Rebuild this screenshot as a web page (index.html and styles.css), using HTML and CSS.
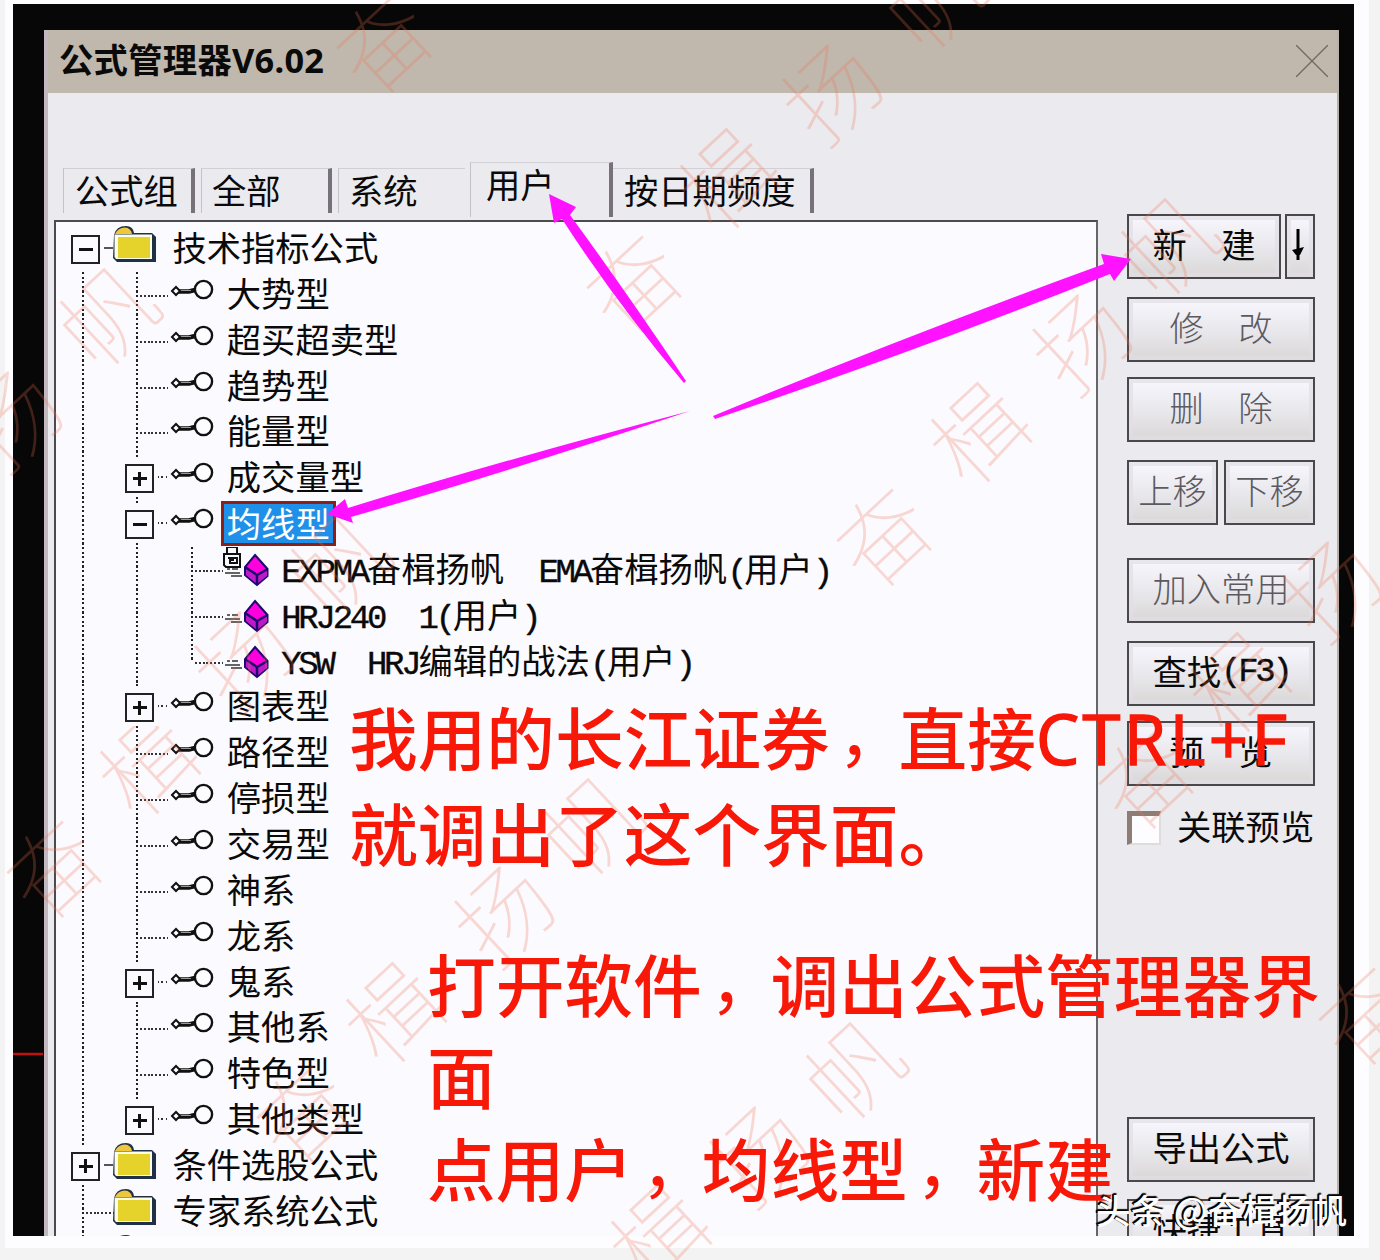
FILE: index.html
```html
<!DOCTYPE html>
<html lang="zh-CN">
<head>
  <meta charset="UTF-8">
  <meta name="viewport" content="width=device-width, initial-scale=1.0">
  <title>公式管理器V6.02</title>
  <link rel="stylesheet" href="styles.css">
</head>
<body>
  <!-- 图标定义 -->
  <svg class="defs" width="0" height="0">
    <symbol id="folder" viewBox="0 0 62 46">
      <path d="M4 9 Q6 0 16 0 Q23 0 24 7 L42 7 L46 11 L46 36 L7 36 L3 32 Z" fill="#1f3047"/>
      <path d="M5 8 Q8 1.500 15 1.500 Q21 2 22 8 Z" fill="#eec83a"/>
      <path d="M4.500 8.500 H42 V33 H6 L4.500 31 Z" fill="#fdfde8"/>
      <rect x="8" y="11" width="32" height="21" fill="#e5d32c"/>
    </symbol>
    <symbol id="key" viewBox="0 0 62 46">
      <path d="M13 19.500 H24 L30 18" fill="none" stroke="#111" stroke-width="4.500"/>
      <path d="M15 18.500 H26" stroke="#999" stroke-width="1"/>
      <path d="M7 19 L11 15 L15 19 L11 23 Z" fill="#fff" stroke="#111" stroke-width="2"/>
      <circle cx="38.500" cy="17.500" r="8.600" fill="#fdfcff" stroke="#111" stroke-width="2.400"/>
    </symbol>
    <symbol id="cube" viewBox="0 0 62 46">
      <path d="M36 8 L48.500 22 L48.500 29 L38 38 L26 28 L26 20 Z" fill="#f0d" stroke="#1c0870" stroke-width="2"/>
      <path d="M27 22 L37 29 V36 L27 28 Z M39 29 L48 23 V29 L39 36 Z" fill="#c01ac8"/>
      <path d="M26 20 L38 28 L48.500 22 M38 28 V38" fill="none" stroke="#1c0870" stroke-width="2.500"/>
      <path d="M8 22 H11 M13 22 H19 M6 26 H21 M12 29 H23" stroke="#333" stroke-width="1.500"/>
    </symbol>
    <symbol id="lock" viewBox="0 0 62 46">
      <path d="M8 6 V0 H18 V6 M5 7 H21 V20 H7 L5 18 Z M9 11 H18 V16 H11 V13 H15" fill="none" stroke="#111" stroke-width="2"/>
    </symbol>
  </svg>

  <div class="screen">
    <div class="window">
      <div class="titlebar">
        <h1>公式管理器V6.02</h1>
        <svg class="close" width="32" height="32" viewBox="0 0 32 32"><path d="M0 0 L32 32 M32 0 L0 32" stroke="#6d6862" stroke-width="1.300"/></svg>
      </div>

      <div class="content">
        <div class="left">
          <div class="tabs">
            <div class="tab t1">公式组</div>
            <div class="tab t2">全部</div>
            <div class="tab t3 open">系统</div>
            <div class="tab t4 active">用户</div>
            <div class="tab t5">按日期频度</div>
          </div>

          <div class="tree">
            <div class="row"><i class="g box minus"></i><svg class="icon"><use href="#folder"/></svg><span>技术指标公式</span></div>
            <div class="row"><i class="g v"></i><i class="g v h"></i><svg class="icon"><use href="#key"/></svg><span>大势型</span></div>
            <div class="row"><i class="g v"></i><i class="g v h"></i><svg class="icon"><use href="#key"/></svg><span>超买超卖型</span></div>
            <div class="row"><i class="g v"></i><i class="g v h"></i><svg class="icon"><use href="#key"/></svg><span>趋势型</span></div>
            <div class="row"><i class="g v"></i><i class="g v h"></i><svg class="icon"><use href="#key"/></svg><span>能量型</span></div>
            <div class="row"><i class="g v"></i><i class="g v h box plus"></i><svg class="icon"><use href="#key"/></svg><span>成交量型</span></div>
            <div class="row"><i class="g v"></i><i class="g v h box minus"></i><svg class="icon"><use href="#key"/></svg><span class="selected">均线型</span></div>
            <div class="row"><i class="g v"></i><i class="g v"></i><i class="g v h"></i><svg class="icon"><use href="#cube"/><use href="#lock"/></svg><span><b>EXPMA</b>奋楫扬帆<b>  EMA</b>奋楫扬帆<b>(</b>用户<b>)</b></span></div>
            <div class="row"><i class="g v"></i><i class="g v"></i><i class="g v h"></i><svg class="icon"><use href="#cube"/></svg><span><b>HRJ240  1(</b>用户<b>)</b></span></div>
            <div class="row"><i class="g v"></i><i class="g v"></i><i class="g v h last"></i><svg class="icon"><use href="#cube"/></svg><span><b>YSW  HRJ</b>编辑的战法<b>(</b>用户<b>)</b></span></div>
            <div class="row"><i class="g v"></i><i class="g v h box plus"></i><svg class="icon"><use href="#key"/></svg><span>图表型</span></div>
            <div class="row"><i class="g v"></i><i class="g v h"></i><svg class="icon"><use href="#key"/></svg><span>路径型</span></div>
            <div class="row"><i class="g v"></i><i class="g v h"></i><svg class="icon"><use href="#key"/></svg><span>停损型</span></div>
            <div class="row"><i class="g v"></i><i class="g v h"></i><svg class="icon"><use href="#key"/></svg><span>交易型</span></div>
            <div class="row"><i class="g v"></i><i class="g v h"></i><svg class="icon"><use href="#key"/></svg><span>神系</span></div>
            <div class="row"><i class="g v"></i><i class="g v h"></i><svg class="icon"><use href="#key"/></svg><span>龙系</span></div>
            <div class="row"><i class="g v"></i><i class="g v h box plus"></i><svg class="icon"><use href="#key"/></svg><span>鬼系</span></div>
            <div class="row"><i class="g v"></i><i class="g v h"></i><svg class="icon"><use href="#key"/></svg><span>其他系</span></div>
            <div class="row"><i class="g v"></i><i class="g v h"></i><svg class="icon"><use href="#key"/></svg><span>特色型</span></div>
            <div class="row"><i class="g v"></i><i class="g v h last box plus"></i><svg class="icon"><use href="#key"/></svg><span>其他类型</span></div>
            <div class="row"><i class="g v box plus"></i><svg class="icon"><use href="#folder"/></svg><span>条件选股公式</span></div>
            <div class="row"><i class="g v h"></i><svg class="icon"><use href="#folder"/></svg><span>专家系统公式</span></div>
            <div class="row"><i class="g v"></i><svg class="icon"><use href="#folder"/></svg></div>
          </div>
        </div>

        <div class="side">
          <div class="pair new"><button class="btn wide">新　建</button><button class="btn drop"><svg width="14" height="32" viewBox="0 0 14 32"><path d="M7 0 V31" stroke="#000" stroke-width="3"/><path d="M1 21 L13 18 L9 26 H5 Z" fill="#000"/></svg></button></div>
          <button class="btn off edit">修　改</button>
          <button class="btn off del">删　除</button>
          <div class="pair move"><button class="btn off half">上移</button><button class="btn off half">下移</button></div>
          <button class="btn off add">加入常用</button>
          <button class="btn find">查找<b>(F3)</b></button>
          <button class="btn preview">预　览</button>
          <label class="check"><i></i><span>关联预览</span></label>
          <button class="btn export">导出公式</button>
          <button class="btn quick">快捷工具</button>
        </div>
      </div>
    </div>
  </div>

  <!-- 水印、箭头，盖在窗口上面 -->
  <svg class="overlay" width="1380" height="1260" viewBox="0 0 1380 1260">
    <g class="mark">
      <text transform="translate(380 40) rotate(-43)">奋</text>
      <text transform="translate(630 280) rotate(-43)">奋</text>
      <text transform="translate(724 176) rotate(-43)">楫</text>
      <text transform="translate(828 88) rotate(-43)">扬</text>
      <text transform="translate(930 -5) rotate(-43)">帆</text>
      <text transform="translate(8 415) rotate(-43)">扬</text>
      <text transform="translate(104 312) rotate(-43)">帆</text>
      <text transform="translate(880 533) rotate(-43)">奋</text>
      <text transform="translate(975 430) rotate(-43)">楫</text>
      <text transform="translate(1078 338) rotate(-43)">扬</text>
      <text transform="translate(1165 242) rotate(-43)">帆</text>
      <text transform="translate(50 865) rotate(-43)">奋</text>
      <text transform="translate(144 762) rotate(-43)">楫</text>
      <text transform="translate(240 655) rotate(-43)">扬</text>
      <text transform="translate(335 560) rotate(-43)">帆</text>
      <text transform="translate(300 1110) rotate(-43)">奋</text>
      <text transform="translate(390 1010) rotate(-43)">楫</text>
      <text transform="translate(500 910) rotate(-43)">扬</text>
      <text transform="translate(588 822) rotate(-43)">帆</text>
      <text transform="translate(1142 776) rotate(-43)">奋</text>
      <text transform="translate(1235 680) rotate(-43)">楫</text>
      <text transform="translate(1328 585) rotate(-43)">扬</text>
      <text transform="translate(655 1232) rotate(-43)">楫</text>
      <text transform="translate(755 1150) rotate(-43)">扬</text>
      <text transform="translate(850 1066) rotate(-43)">帆</text>
      <text transform="translate(1362 1012) rotate(-43)">奋</text>
    </g>
    <path d="M13 1054 H43" stroke="#c01010" stroke-width="2.500"/>
    <g fill="#ff12ff">
      <path d="M549 194 L576 207 L570 215 Q625 290 686 381 L684 383 Q617 304 562 219 L554 223 Z"/>
      <path d="M1131 259 L1114 281 L1110 274 Q920 350 715 419 L713 416 Q900 338 1104 264 L1101 254 Z"/>
      <path d="M327 514 L345 499 L348 508 Q500 461 690 411 Q510 471 351 517 L353 523 Z"/>
    </g>
  </svg>

  <div class="note note1"><p>我用的长江证券<i>，</i>直接<em>CTRL+F</em></p><p>就调出了这个界面。</p></div>
  <div class="note note2"><p>打开软件<i>，</i>调出公式管理器界</p><p>面</p><p>点用户<i>，</i>均线型<i>，</i>新建</p></div>
  <div class="author">头条 @奋楫扬帆</div>
</body>
</html>
```

FILE: styles.css
```css
* {
  box-sizing: border-box;
}

body {
  margin: 0;
  width: 1380px;
  height: 1260px;
  padding: 4px 0 0 13px;
  overflow: hidden;
  position: relative;
  background: linear-gradient(#fdfcff, #fdfcff) 5px 0 / 1364px 1248px no-repeat #f3f3f3;
  font-family: "Noto Sans CJK SC", sans-serif;
  font-size: 34.3px;
  color: #0a0a0a;
}

.defs {
  position: absolute;
}

.screen {
  width: 1341px;
  height: 1232px;
  padding: 26px 15px 0 31px;
  background: #080707;
  overflow: hidden;
}

.window {
  height: 1206px;
  background: #ebeaee;
  border-left: 4px solid #c2b8c0;
  border-right: 2px solid #b8b0aa;
  overflow: hidden;
}

.titlebar {
  display: flex;
  align-items: center;
  justify-content: space-between;
  height: 63px;
  margin-left: -4px;
  margin-right: -2px;
  padding: 0 11px 2px 15px;
  background: #c0b7ad;
}

.titlebar h1 {
  margin: 0;
  padding-bottom: 2px;
  font: bold 34.3px/58px "Noto Sans", "Noto Sans CJK SC", sans-serif;
  letter-spacing: 0.3px;
}

.content {
  display: flex;
  padding-left: 6px;
  height: 1143px;
}

.left {
  width: 1044px;
  padding-top: 69px;
}

.tabs {
  display: flex;
  height: 58px;
  padding: 6px 0 0 9px;
}

.tab {
  height: 45px;
  padding-left: 11px;
  line-height: 41px;
  border-top: 1px solid #d2d0d4;
  border-left: 1px solid #c4c2c6;
  border-right: 4px solid #77727a;
  white-space: nowrap;
}

.t1 { width: 132px; }
.t2 { width: 131px; margin-left: 6px; padding-left: 10px; }
.t3 { width: 127px; margin-left: 6px; padding-left: 10px; }
.t4 { width: 143px; margin-left: 5px; padding-left: 15px; }
.t5 { width: 201px; border-left: none; }

.tab.open {
  border-right: none;
}

.tab.active {
  height: 55px;
  margin-top: -6px;
}

.tree {
  height: 1020px;
  padding-top: 4px;
  background: #fbfaff;
  border: 2px solid #4c4a4e;
  border-right-color: #666;
  overflow: hidden;
}

.row {
  display: flex;
  height: 45.85px;
  line-height: 40px;
  white-space: pre;
}

/* 树形虚线：v 竖线，h 横线，box 展开按钮 */
.g {
  position: relative;
  flex: none;
  width: 54.4px;
}

.g.v::before {
  content: "";
  position: absolute;
  left: 26px;
  top: 0;
  width: 2px;
  height: 100%;
  background: repeating-linear-gradient(#222 0 2.3px, transparent 2.3px 4.585px);
}

.g.v.last::before {
  height: 50%;
}

.g.h::after {
  content: "";
  position: absolute;
  left: 30px;
  top: 23px;
  width: 28px;
  height: 2px;
  background: repeating-linear-gradient(90deg, #333 0 2px, transparent 2px 3.8px);
}

.g.box::before {
  content: "";
  position: absolute;
  left: 14px;
  top: 9px;
  width: 26px;
  height: 25px;
  border: 2px solid #222;
  outline: 4px solid #fbfaff;
  background: linear-gradient(#111, #111) center / 14px 3px no-repeat #fbfaff;
  z-index: 1;
}

/* last 的竖线只画一半，按钮本身不缩 */
.g.v.box::before {
  height: 25px;
}

.g.v.box::before,
.g.box::before {
  left: 15px;
  width: 25px;
  height: 25px;
}

.g.v.box.minus::before {
  background: linear-gradient(#111, #111) center / 14px 3px no-repeat #fbfaff;
}

.g.box.plus::before {
  background: linear-gradient(#111, #111) center / 14px 3px no-repeat, linear-gradient(#111, #111) center / 3px 14px no-repeat #fbfaff;
}

.g.box::after {
  content: "";
  position: absolute;
  left: 42px;
  top: 21px;
  width: 15px;
  height: 2px;
  background: #555;
}

.g.box.h::after {
  background: repeating-linear-gradient(90deg, #333 0 2px, transparent 2px 4.5px);
}

/* 展开按钮上下的竖线 */
.g.v.box {
  background: repeating-linear-gradient(#222 0 2.3px, transparent 2.3px 4.585px) 26px 0 / 2px 100% no-repeat;
}

.g.v.box.last {
  background-size: 2px 50%;
}

.icon {
  flex: none;
  width: 62px;
  height: 46px;
}

.row b, .btn b {
  font: normal 34px/36px "Liberation Mono", monospace;
  letter-spacing: -3.25px;
  -webkit-text-stroke: 0.4px #0a0a0a;
}

.row .selected {
  height: 45px;
  margin-left: -6px;
  padding: 0 3px;
  line-height: 36px;
  color: #fff;
  background: #1e90ea;
  border: 3px solid #8c2018;
}

.side {
  display: flex;
  flex-direction: column;
  width: 188px;
  margin-left: 29px;
  padding-top: 121px;
}

.btn {
  flex: none;
  display: flex;
  align-items: center;
  justify-content: center;
  width: 100%;
  height: 65px;
  padding: 0 0 7px;
  font: 34.3px "Noto Sans CJK SC", sans-serif;
  color: #0a0a0a;
  white-space: nowrap;
  background: linear-gradient(#f8f7fd, #e9e8ed 50%, #d9d7d6);
  border: 2px solid #4a484a;
  box-shadow: inset 0 0 0 4px rgba(225, 222, 230, 0.7);
}

.btn.off {
  color: #5c5a5f;
  font-weight: 300;
}

.btn b {
  padding-top: 4px;
}

.pair {
  display: flex;
  gap: 6px;
}

.pair .wide { width: 154px; }
.pair .drop { width: 30px; padding: 0 4px 3px 0; }
.pair .half { width: 91px; }
.new { gap: 4px; }
.edit { margin-top: 18px; }
.del { margin-top: 15px; }
.move { margin-top: 18px; }
.add { margin-top: 33px; }
.find { margin-top: 18px; }
.preview { margin-top: 15px; }
.export { margin-top: 272px; }
.quick { margin-top: 17px; }

.check {
  display: flex;
  align-items: center;
  gap: 16px;
  height: 40px;
  margin-top: 22px;
  margin-bottom: -3px;
  white-space: nowrap;
}

.check span {
  padding-bottom: 6px;
}

.check i {
  width: 34px;
  height: 34px;
  background: #fdfcff;
  border: 2px solid #e0dcdc;
  border-top: 5px solid #8e7d75;
  border-left: 5px solid #8e7d75;
}

.overlay {
  position: absolute;
  left: 0;
  top: 0;
}

.mark text {
  font-family: "Noto Sans CJK SC", sans-serif;
  font-size: 94px;
  font-weight: 100;
  text-anchor: middle;
  dominant-baseline: central;
  fill: rgba(240, 110, 80, 0.25);
}

.note {
  position: absolute;
  font-size: 68.7px;
  font-weight: 500;
  line-height: 92px;
  color: #f81808;
  white-space: nowrap;
}

.note p {
  margin: 0;
}

.note i {
  position: relative;
  left: 8px;
  top: -4px;
  font-style: normal;
  font-weight: 400;
}

.note em {
  font-family: "Open Sans", sans-serif;
  font-style: normal;
  letter-spacing: 3.4px;
  -webkit-text-stroke: 1.5px #f81808;
}

.note1 {
  left: 349px;
  top: 689px;
}

.note2 {
  left: 427px;
  top: 936px;
}

.author {
  position: absolute;
  left: 1096px;
  top: 1185px;
  font-size: 34.6px;
  font-weight: 500;
  line-height: 48px;
  letter-spacing: 0.3px;
  color: #fff;
  text-shadow: -2px -1px 0 #000, -1px -2px 1px #111;
  white-space: nowrap;
}
```
